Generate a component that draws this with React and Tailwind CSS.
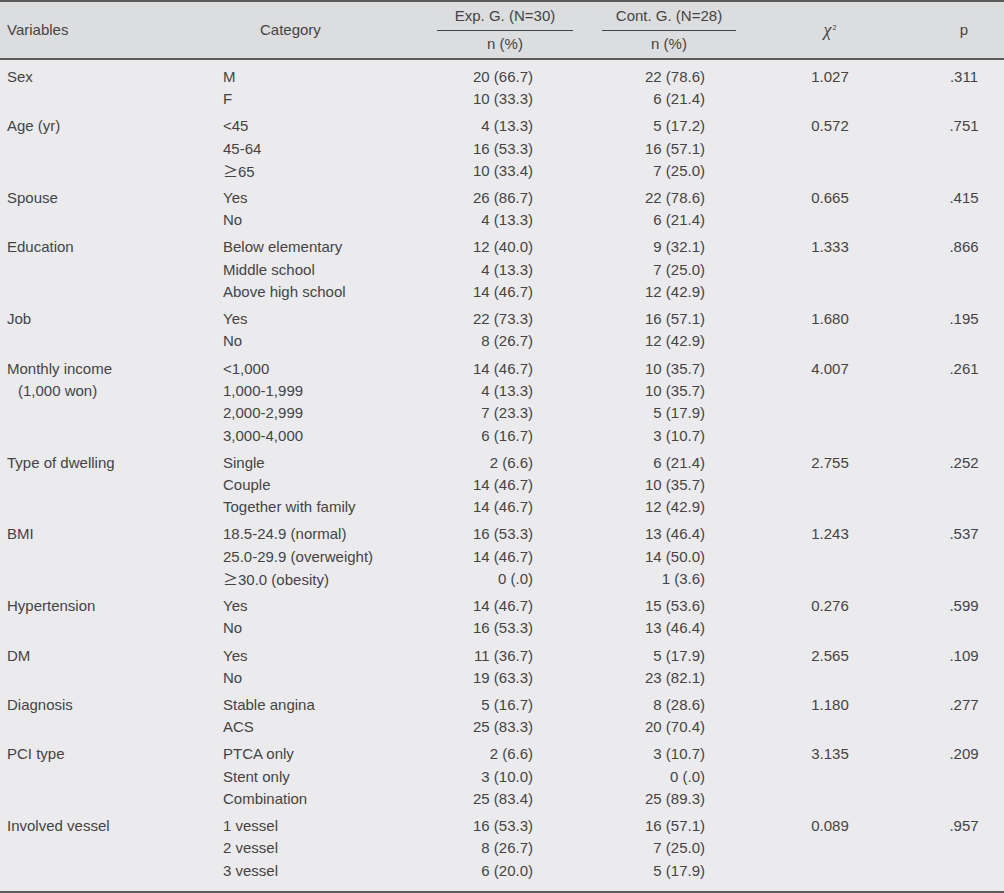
import React from "react";

const data = [
  { v: ["Sex"], c: ["M", "F"], e: ["20 (66.7)", "10 (33.3)"], k: ["22 (78.6)", "6 (21.4)"], x: "1.027", p: ".311" },
  { v: ["Age (yr)"], c: ["<45", "45-64", "≥65"], e: ["4 (13.3)", "16 (53.3)", "10 (33.4)"], k: ["5 (17.2)", "16 (57.1)", "7 (25.0)"], x: "0.572", p: ".751" },
  { v: ["Spouse"], c: ["Yes", "No"], e: ["26 (86.7)", "4 (13.3)"], k: ["22 (78.6)", "6 (21.4)"], x: "0.665", p: ".415" },
  { v: ["Education"], c: ["Below elementary", "Middle school", "Above high school"], e: ["12 (40.0)", "4 (13.3)", "14 (46.7)"], k: ["9 (32.1)", "7 (25.0)", "12 (42.9)"], x: "1.333", p: ".866" },
  { v: ["Job"], c: ["Yes", "No"], e: ["22 (73.3)", "8 (26.7)"], k: ["16 (57.1)", "12 (42.9)"], x: "1.680", p: ".195" },
  { v: ["Monthly income", "(1,000 won)"], c: ["<1,000", "1,000-1,999", "2,000-2,999", "3,000-4,000"], e: ["14 (46.7)", "4 (13.3)", "7 (23.3)", "6 (16.7)"], k: ["10 (35.7)", "10 (35.7)", "5 (17.9)", "3 (10.7)"], x: "4.007", p: ".261" },
  { v: ["Type of dwelling"], c: ["Single", "Couple", "Together with family"], e: ["2 (6.6)", "14 (46.7)", "14 (46.7)"], k: ["6 (21.4)", "10 (35.7)", "12 (42.9)"], x: "2.755", p: ".252" },
  { v: ["BMI"], c: ["18.5-24.9 (normal)", "25.0-29.9 (overweight)", "≥30.0 (obesity)"], e: ["16 (53.3)", "14 (46.7)", "0 (.0)"], k: ["13 (46.4)", "14 (50.0)", "1 (3.6)"], x: "1.243", p: ".537" },
  { v: ["Hypertension"], c: ["Yes", "No"], e: ["14 (46.7)", "16 (53.3)"], k: ["15 (53.6)", "13 (46.4)"], x: "0.276", p: ".599" },
  { v: ["DM"], c: ["Yes", "No"], e: ["11 (36.7)", "19 (63.3)"], k: ["5 (17.9)", "23 (82.1)"], x: "2.565", p: ".109" },
  { v: ["Diagnosis"], c: ["Stable angina", "ACS"], e: ["5 (16.7)", "25 (83.3)"], k: ["8 (28.6)", "20 (70.4)"], x: "1.180", p: ".277" },
  { v: ["PCI type"], c: ["PTCA only", "Stent only", "Combination"], e: ["2 (6.6)", "3 (10.0)", "25 (83.4)"], k: ["3 (10.7)", "0 (.0)", "25 (89.3)"], x: "3.135", p: ".209" },
  { v: ["Involved vessel"], c: ["1 vessel", "2 vessel", "3 vessel"], e: ["16 (53.3)", "8 (26.7)", "6 (20.0)"], k: ["16 (57.1)", "7 (25.0)", "5 (17.9)"], x: "0.089", p: ".957" },
];

const font = { fontFamily: '"Liberation Sans", Arial, sans-serif' };

function Cat({ t }) {
  if (t.startsWith("≥")) {
    return (
      <div className="h-[22.3px] overflow-hidden">
        <span className="inline-block w-[15px] text-center leading-[22.3px]" style={{ fontFamily: '"Noto Sans CJK KR", sans-serif' }}>≥</span>
        {t.slice(1)}
      </div>
    );
  }
  return <div className="h-[22.3px]">{t}</div>;
}

export default function App() {
  return (
    <div className="w-[1004px] h-[893px] bg-[#ebebed] text-[15px] text-[#444444] leading-[22.3px]" style={font}>
      <div className="border-t-2 border-b-2 border-[#5a5a5a] bg-[#dcdddf] h-[60px] grid grid-cols-[210px_227px_136px_29px_134px_188px_80px]">
        <div className="pl-[7px] flex items-center">Variables</div>
        <div className="pl-[50px] flex items-center">Category</div>
        <div className="flex flex-col">
          <div className="h-[28px] flex items-center justify-center">Exp. G. (N=30)</div>
          <div className="h-px bg-[#444]"></div>
          <div className="h-[27px] flex items-center justify-center">n (%)</div>
        </div>
        <div></div>
        <div className="flex flex-col">
          <div className="h-[28px] flex items-center justify-center">Cont. G. (N=28)</div>
          <div className="h-px bg-[#444]"></div>
          <div className="h-[27px] flex items-center justify-center">n (%)</div>
        </div>
        <div className="flex items-center justify-center">
          <span className="italic text-[18px]" style={{ fontFamily: '"Liberation Serif", serif' }}>χ</span>
          <span className="text-[7px] leading-none self-start mt-[22px] ml-[1px]">2</span>
        </div>
        <div className="flex items-center justify-center">p</div>
      </div>
      <div className="h-[831px] pt-[5.85px] flex flex-col gap-[4.85px]">
        {data.map((g, i) => (
          <div key={i} className="grid grid-cols-[210px_227px_136px_29px_134px_188px_80px]">
            <div className="pl-[7px] flex flex-col">
              {g.v.map((t, j) => (
                <div key={j} className={j > 0 ? "pl-[11px] h-[22.3px]" : "h-[22.3px]"}>{t}</div>
              ))}
            </div>
            <div className="pl-[13px] flex flex-col whitespace-nowrap">
              {g.c.map((t, j) => (
                <Cat key={j} t={t} />
              ))}
            </div>
            <div className="pr-[40px] flex flex-col items-end whitespace-pre">
              {g.e.map((t, j) => (
                <div key={j} className="h-[22.3px]">{t}</div>
              ))}
            </div>
            <div></div>
            <div className="pr-[31px] flex flex-col items-end whitespace-pre">
              {g.k.map((t, j) => (
                <div key={j} className="h-[22.3px]">{t}</div>
              ))}
            </div>
            <div className="text-center h-[22.3px]">{g.x}</div>
            <div className="text-center h-[22.3px]">{g.p}</div>
          </div>
        ))}
      </div>
      <div className="border-t-2 border-[#5a5a5a]"></div>
    </div>
  );
}
